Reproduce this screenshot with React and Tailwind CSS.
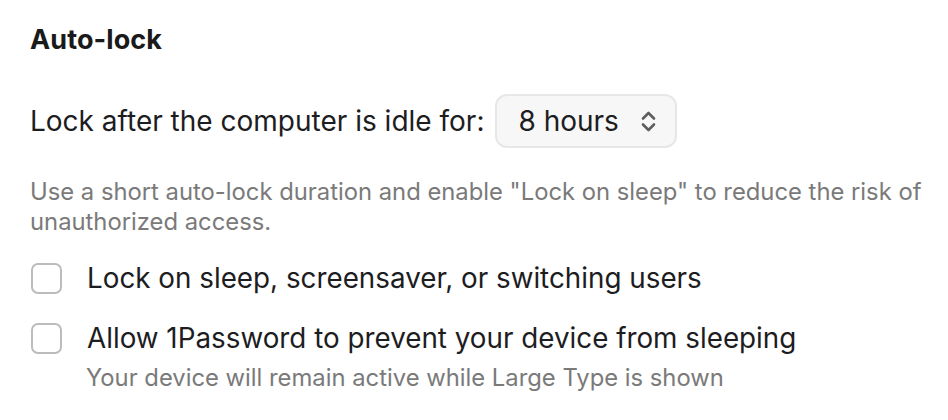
import React from "react";

function Checkbox() {
  return (
    <div className="ml-[1px] w-[31px] h-[31px] shrink-0 rounded-[7px] border-2 border-[#bcbcbc] bg-white" />
  );
}

export default function App() {
  return (
    <div
      className="w-[948px] h-[420px] bg-white text-[#1d1d1f] pl-[30px] pt-[23px]"
      style={{ fontFamily: "Inter, 'Noto Sans', sans-serif" }}
    >
      <h2 className="text-[27px] font-bold leading-[34px] tracking-[0.1px] text-[#1a1a1a]">Auto-lock</h2>
      <div className="mt-[37px] flex items-center">
        <span className="text-[28px] leading-[34px]">Lock after the computer is idle for:</span>
        <div className="ml-[11px] w-[182px] h-[54px] rounded-[12px] border-2 border-[#e7e7e7] bg-[#f7f7f7] flex items-center pl-[21px] pr-[19px] justify-between">
          <span className="text-[28px] leading-[34px]">8 hours</span>
          <svg width="15" height="23" viewBox="0 0 15 23" fill="none" stroke="#5e5e5e" strokeWidth="2.6" strokeLinecap="round" strokeLinejoin="round">
            <path d="M2 8.5 L7.5 3 L13 8.5" />
            <path d="M2 14.5 L7.5 20 L13 14.5" />
          </svg>
        </div>
      </div>
      <p className="mt-[29px] w-[905px] text-[23.8px] leading-[30px] text-[#7a7a7a]">
        Use a short auto-lock duration and enable "Lock on sleep" to reduce the risk of unauthorized access.
      </p>
      <div className="mt-[24px] flex items-center gap-[25px]">
        <Checkbox />
        <span className="text-[27.8px] leading-[34px]">Lock on sleep, screensaver, or switching users</span>
      </div>
      <div className="mt-[26px] flex items-center gap-[25px]">
        <Checkbox />
        <span className="text-[27.8px] leading-[34px]">Allow 1Password to prevent your device from sleeping</span>
      </div>
      <p className="ml-[56px] mt-[8px] text-[23.8px] leading-[30px] text-[#7a7a7a]">
        Your device will remain active while Large Type is shown
      </p>
    </div>
  );
}
